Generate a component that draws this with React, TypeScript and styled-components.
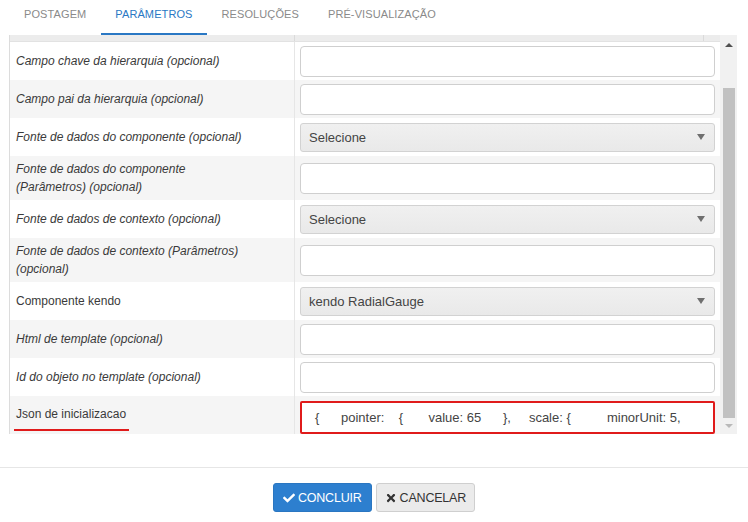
import React from "react";
import styled, { createGlobalStyle } from "styled-components";
import { FaCheck, FaTimes } from "react-icons/fa";

const Global = createGlobalStyle`
  html, body { margin: 0; padding: 0; background: #fff; }
  body { font-family: "Liberation Sans", Arial, sans-serif; color: #333; }
  * { box-sizing: border-box; }
`;

const Page = styled.div`
  width: 748px;
  height: 522px;
  overflow: hidden;
  background: #fff;
  display: flex;
  flex-direction: column;
`;

const Tabs = styled.div`
  display: flex;
  height: 35px;
  padding-left: 10px;
`;

const Tab = styled.div<{ $active?: boolean }>`
  height: 35px;
  padding: 8px 14px 0;
  margin-right: 1px;
  font-size: 11px;
  letter-spacing: 0.1px;
  color: ${(p) => (p.$active ? "#2a78c4" : "#8a8a8a")};
  border-bottom: 2px solid ${(p) => (p.$active ? "#2a78c4" : "transparent")};
  white-space: nowrap;
`;

const GridWrap = styled.div`
  margin-left: 9px;
  width: 728px;
  height: 399px;
  display: flex;
  border-left: 1px solid #dcdcdc;
`;

const GridBody = styled.div`
  flex: 1;
  display: flex;
  flex-direction: column;
  overflow: hidden;
`;

const HeaderRow = styled.div`
  height: 7px;
  flex: none;
  display: grid;
  grid-template-columns: 285px 1fr 16px;
  background: #ececec;
  border-bottom: 1px solid #e2e2e2;
`;

const HeaderCell = styled.div`
  border-right: 1px solid #dadada;
  &:last-child { border-right: none; }
`;

const Row = styled.div<{ $alt?: boolean; $tall?: boolean }>`
  flex: none;
  height: ${(p) => (p.$tall ? 44 : 38)}px;
  display: grid;
  grid-template-columns: 285px 1fr;
  background: ${(p) => (p.$alt ? "#f5f5f5" : "#fff")};
`;

const LabelCell = styled.div<{ $plain?: boolean }>`
  display: flex;
  align-items: center;
  padding: 0 8px 0 6px;
  font-size: 12px;
  line-height: 18px;
  font-style: ${(p) => (p.$plain ? "normal" : "italic")};
  color: #3a3a3a;
  border-right: 1px solid #e6e6e6;
`;

const Underlined = styled.span`
  display: inline-block;
  position: relative;
  padding-bottom: 2px;
  &::after {
    content: "";
    position: absolute;
    left: -2px;
    right: -3px;
    bottom: -6px;
    height: 2px;
    background: #e01b1b;
  }
`;

const FieldCell = styled.div`
  display: flex;
  align-items: center;
  padding: 0 5px 0 5px;
`;

const TextInput = styled.div`
  width: 100%;
  height: 31px;
  background: #fff;
  border: 1px solid #cfcfcf;
  border-radius: 4px;
`;

const Select = styled.div`
  width: 100%;
  height: 29px;
  display: flex;
  align-items: center;
  justify-content: space-between;
  padding: 0 9px 0 8px;
  background: linear-gradient(#f0f0f0, #e9e9e9);
  border: 1px solid #d2d2d2;
  border-radius: 3px;
  font-size: 13px;
  color: #444;
`;

const Arrow = styled.span`
  width: 0;
  height: 0;
  border-left: 4px solid transparent;
  border-right: 4px solid transparent;
  border-top: 6px solid #6f6f6f;
`;

const JsonInput = styled.div`
  width: 100%;
  height: 33px;
  margin-top: 4px;
  display: flex;
  align-items: center;
  padding: 0 0 0 13px;
  border: 2px solid #e01b1b;
  border-radius: 2px;
  background: #fff;
  font-size: 13px;
  color: #444;
  white-space: pre;
  overflow: hidden;
`;

const Scrollbar = styled.div`
  width: 17px;
  flex: none;
  background: #f1f1f1;
  display: flex;
  flex-direction: column;
  align-items: center;
  padding: 8px 0 6px;
`;

const ArrowUp = styled.span`
  width: 0;
  height: 0;
  border-left: 4px solid transparent;
  border-right: 4px solid transparent;
  border-bottom: 4px solid #505050;
  flex: none;
`;

const ArrowDown = styled.span`
  width: 0;
  height: 0;
  border-left: 4px solid transparent;
  border-right: 4px solid transparent;
  border-top: 4px solid #b9b9b9;
  flex: none;
`;

const Thumb = styled.div`
  width: 12px;
  height: 330px;
  margin: 41px 0 0;
  background: #c1c1c1;
  flex: none;
`;

const Spacer = styled.div`
  flex: 1;
`;

const Footer = styled.div`
  margin-top: 33px;
  border-top: 1px solid #e6e6e6;
  display: flex;
  justify-content: center;
  gap: 4px;
  padding: 15px 0 0 0;
`;

const Button = styled.button<{ $primary?: boolean }>`
  height: 29px;
  display: flex;
  align-items: center;
  gap: 3px;
  padding: 0 ${(p) => (p.$primary ? "9px" : "8px")};
  font-family: "Liberation Sans", Arial, sans-serif;
  font-size: 12.5px;
  letter-spacing: -0.2px;
  border-radius: 3px;
  cursor: pointer;
  color: ${(p) => (p.$primary ? "#fff" : "#333")};
  background: ${(p) => (p.$primary ? "#2d7fcf" : "#ebebeb")};
  border: 1px solid ${(p) => (p.$primary ? "#2a76c1" : "#cfcfcf")};
  svg { font-size: 12px; }
`;

type Field = {
  label: React.ReactNode;
  kind: "input" | "select" | "json";
  value?: string;
  tall?: boolean;
  plain?: boolean;
};

const json =
  "{" + " ".repeat(6) + "pointer:" + " ".repeat(4) + "{" + " ".repeat(7) +
  "value:" + " " + "65" + " ".repeat(6) + "}," + " ".repeat(5) + "scale:" +
  " " + "{" + " ".repeat(10) + "minorUnit:" + " " + "5,";

const fields: Field[] = [
  { label: "Campo chave da hierarquia (opcional)", kind: "input" },
  { label: "Campo pai da hierarquia (opcional)", kind: "input" },
  { label: "Fonte de dados do componente (opcional)", kind: "select", value: "Selecione" },
  { label: <>Fonte de dados do componente<br />(Parâmetros) (opcional)</>, kind: "input", tall: true },
  { label: "Fonte de dados de contexto (opcional)", kind: "select", value: "Selecione" },
  { label: <>Fonte de dados de contexto (Parâmetros)<br />(opcional)</>, kind: "input", tall: true },
  { label: "Componente kendo", kind: "select", value: "kendo RadialGauge", plain: true },
  { label: "Html de template (opcional)", kind: "input" },
  { label: "Id do objeto no template (opcional)", kind: "input" },
  {
    label: <Underlined>Json de inicializacao</Underlined>,
    kind: "json",
    plain: true,
    value: json,
  },
];

export default function App() {
  return (
    <Page>
      <Global />
      <Tabs>
        <Tab>POSTAGEM</Tab>
        <Tab $active>PARÂMETROS</Tab>
        <Tab>RESOLUÇÕES</Tab>
        <Tab>PRÉ-VISUALIZAÇÃO</Tab>
      </Tabs>
      <GridWrap>
        <GridBody>
          <HeaderRow>
            <HeaderCell />
            <HeaderCell />
            <HeaderCell />
          </HeaderRow>
          {fields.map((f, i) => (
            <Row key={i} $alt={i % 2 === 1} $tall={f.tall}>
              <LabelCell $plain={f.plain}>
                <span>{f.label}</span>
              </LabelCell>
              <FieldCell>
                {f.kind === "input" && <TextInput />}
                {f.kind === "select" && (
                  <Select>
                    <span>{f.value}</span>
                    <Arrow />
                  </Select>
                )}
                {f.kind === "json" && <JsonInput>{f.value}</JsonInput>}
              </FieldCell>
            </Row>
          ))}
        </GridBody>
        <Scrollbar>
          <ArrowUp />
          <Thumb />
          <Spacer />
          <ArrowDown />
        </Scrollbar>
      </GridWrap>
      <Footer>
        <Button $primary>
          <FaCheck />
          CONCLUIR
        </Button>
        <Button>
          <FaTimes />
          CANCELAR
        </Button>
      </Footer>
    </Page>
  );
}
